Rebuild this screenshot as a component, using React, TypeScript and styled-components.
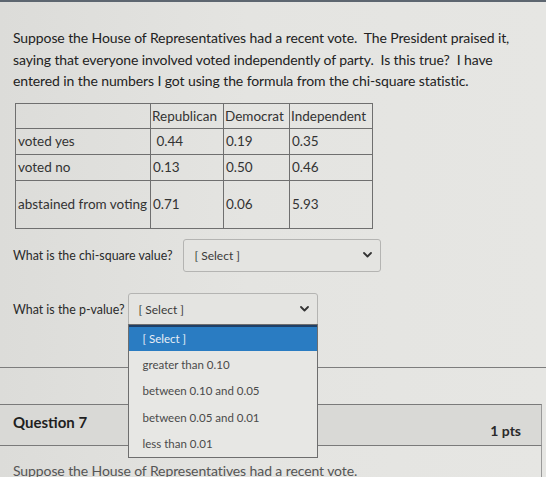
import React from "react";
import styled, { createGlobalStyle } from "styled-components";

const GlobalStyle = createGlobalStyle`
  html, body {
    margin: 0;
    padding: 0;
    background: #e2e2df;
    overflow: hidden;
  }
  body {
    font-family: Lato, "Open Sans", "Liberation Sans", sans-serif;
    color: #262626;
  }
`;

const Page = styled.div`
  width: 546px;
  height: 477px;
  overflow: hidden;
  border-top: 2px solid #5d6670;
  background: linear-gradient(90deg, #dcdcd9 0%, #e4e4e1 45%, #e6e6e3 100%);
`;

const QuestionBody = styled.div`
  padding: 25px 0 0 13px;
  border-bottom: 1px solid #7d7d7d;
  height: 366px;
  box-sizing: border-box;
`;

const Prompt = styled.p`
  margin: 0;
  width: 520px;
  font-size: 14px;
  line-height: 21.5px;
  color: #222;
  letter-spacing: -0.1px;
`;

const DataTable = styled.table`
  margin: 11px 0 0 2px;
  border-collapse: collapse;
  font-size: 13.5px;
  color: #333;
`;

const Cell = styled.td<{ $w?: number; $h?: number }>`
  border: 1px solid #6f6f6f;
  padding: 0 0 0 2px;
  width: ${(p) => (p.$w ? `${p.$w}px` : "auto")};
  height: ${(p) => (p.$h ? `${p.$h}px` : "auto")};
  box-sizing: border-box;
  white-space: pre;
  vertical-align: middle;
`;

const HeadCell = styled(Cell).attrs({ as: "th" })`
  font-weight: 400;
  text-align: left;
  padding: 0 1px;
`;

const AnswerRow = styled.div<{ $top: number; $gap: number }>`
  display: flex;
  align-items: center;
  gap: ${(p) => p.$gap}px;
  margin-top: ${(p) => p.$top}px;
`;

const Label = styled.span`
  font-size: 12.4px;
  color: #2a2a2a;
`;

const SelectWrap = styled.div<{ $w: number }>`
  position: relative;
  width: ${(p) => p.$w}px;
`;

const SelectBox = styled.div`
  height: 33px;
  box-sizing: border-box;
  border: 1px solid #b4b4b2;
  border-radius: 3px;
  background: #e4e4e1;
  display: flex;
  align-items: center;
  justify-content: space-between;
  padding: 0 8px 0 10px;
  font-size: 12px;
  color: #3a3a3a;
`;

const Menu = styled.ul`
  position: absolute;
  top: 31px;
  left: 0;
  right: 0;
  margin: 0;
  padding: 0;
  list-style: none;
  border: 1px solid #6e6e6e;
  background: #e7e7e4;
  z-index: 2;
`;

const MenuItem = styled.li<{ $active?: boolean }>`
  height: 26.5px;
  display: flex;
  align-items: center;
  padding-left: 14px;
  font-size: 11.5px;
  color: ${(p) => (p.$active ? "#e8eef6" : "#4a4a4a")};
  background: ${(p) => (p.$active ? "#2a7cc2" : "transparent")};
  border-top: ${(p) => (p.$active ? "2px solid #1f3f66" : "none")};
  box-sizing: border-box;
`;

const QuestionHeader = styled.div`
  margin-top: 36px;
  margin-right: 4px;
  height: 42px;
  box-sizing: border-box;
  border-top: 1px solid #7a7a7a;
  border-bottom: 1px solid #7a7a7a;
  border-right: 1px solid #9a9a9a;
  background: #d9d9d6;
  display: flex;
  justify-content: space-between;
  padding: 6px 20px 4px 13px;
`;

const QuestionTitle = styled.h2`
  margin: 0;
  align-self: flex-start;
  font-size: 15px;
  font-weight: 700;
  color: #1f1f1f;
  line-height: 22px;
`;

const Points = styled.span`
  align-self: flex-end;
  font-size: 14px;
  font-weight: 700;
  color: #2a2a2a;
  line-height: 20px;
`;

const NextBody = styled.div`
  padding: 14px 0 0 13px;
  margin-right: 4px;
  border-right: 1px solid #9a9a9a;
  height: 40px;
`;

const FadedPrompt = styled(Prompt)`
  color: #555;
`;

const Chevron = () => (
  <svg width="9" height="6" viewBox="0 0 9 6" aria-hidden="true">
    <polyline
      points="1,1 4.5,4.5 8,1"
      fill="none"
      stroke="#333"
      strokeWidth="1.8"
      strokeLinecap="round"
      strokeLinejoin="round"
    />
  </svg>
);

const rows: { label: string; values: string[]; h: number }[] = [
  { label: "voted yes", values: [" 0.44", "0.19", "0.35"], h: 26 },
  { label: "voted no", values: ["0.13", "0.50", "0.46"], h: 26 },
  { label: "abstained from voting", values: ["0.71", "0.06", "5.93"], h: 48 },
];

const pOptions = [
  "greater than 0.10",
  "between 0.10 and 0.05",
  "between 0.05 and 0.01",
  "less than 0.01",
];

export default function App() {
  return (
    <>
      <GlobalStyle />
      <Page>
        <QuestionBody>
          <Prompt>
            Suppose the House of Representatives had a recent vote.&nbsp; The President praised it,
            saying that everyone involved voted independently of party.&nbsp; Is this true?&nbsp; I have
            entered in the numbers I got using the formula from the chi-square statistic.
          </Prompt>
          <DataTable>
            <tbody>
              <tr>
                <HeadCell $w={135} $h={25} />
                <HeadCell $w={73}>Republican</HeadCell>
                <HeadCell $w={66}>Democrat</HeadCell>
                <HeadCell $w={83}>Independent</HeadCell>
              </tr>
              {rows.map((r) => (
                <tr key={r.label}>
                  <Cell $h={r.h}>{r.label}</Cell>
                  {r.values.map((v, i) => (
                    <Cell key={i}>{v}</Cell>
                  ))}
                </tr>
              ))}
            </tbody>
          </DataTable>

          <AnswerRow $top={10} $gap={11}>
            <Label>What is the chi-square value?</Label>
            <SelectWrap $w={198}>
              <SelectBox>
                <span>[ Select ]</span>
                <Chevron />
              </SelectBox>
            </SelectWrap>
          </AnswerRow>

          <AnswerRow $top={21} $gap={3}>
            <Label>What is the p-value?</Label>
            <SelectWrap $w={190}>
              <SelectBox>
                <span>[ Select ]</span>
                <Chevron />
              </SelectBox>
              <Menu>
                <MenuItem $active>[ Select ]</MenuItem>
                {pOptions.map((o) => (
                  <MenuItem key={o}>{o}</MenuItem>
                ))}
              </Menu>
            </SelectWrap>
          </AnswerRow>
        </QuestionBody>

        <QuestionHeader>
          <QuestionTitle>Question 7</QuestionTitle>
          <Points>1 pts</Points>
        </QuestionHeader>
        <NextBody>
          <FadedPrompt>Suppose the House of Representatives had a recent vote.</FadedPrompt>
        </NextBody>
      </Page>
    </>
  );
}
